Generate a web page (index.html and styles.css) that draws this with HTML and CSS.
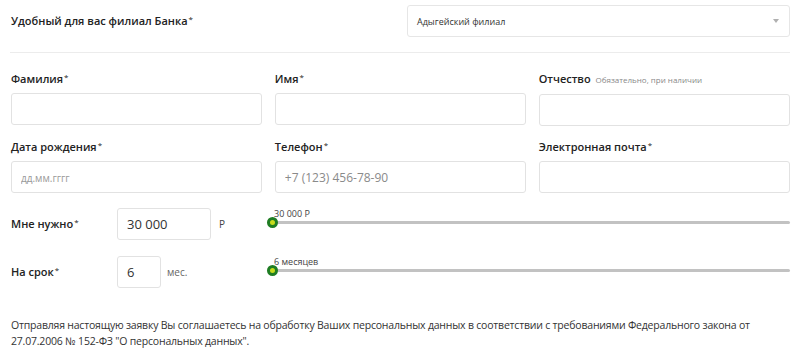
FILE: index.html
```html
<!DOCTYPE html>
<html lang="ru">
<head>
  <meta charset="UTF-8">
  <meta name="viewport" content="width=device-width, initial-scale=1.0">
  <title>Заявка на кредит</title>
  <link rel="stylesheet" href="styles.css">
</head>
<body>
  <form class="credit-form">
    <div class="branch-row">
      <label class="field-label">Удобный для вас филиал Банка<span class="req">*</span></label>
      <div class="select">
        <span>Адыгейский филиал</span>
        <i class="select-arrow"></i>
      </div>
    </div>
    <div class="divider"></div>

    <div class="fields">
      <div class="field">
        <label class="field-label">Фамилия<span class="req">*</span></label>
        <input class="input" type="text">
      </div>
      <div class="field">
        <label class="field-label">Имя<span class="req">*</span></label>
        <input class="input" type="text">
      </div>
      <div class="field">
        <label class="field-label">Отчество <span class="hint">Обязательно, при наличии</span></label>
        <input class="input" type="text">
      </div>
      <div class="field">
        <label class="field-label">Дата рождения<span class="req">*</span></label>
        <input class="input input-small" type="text" placeholder="дд.мм.гггг">
      </div>
      <div class="field">
        <label class="field-label">Телефон<span class="req">*</span></label>
        <input class="input" type="text" placeholder="+7 (123) 456-78-90">
      </div>
      <div class="field">
        <label class="field-label">Электронная почта<span class="req">*</span></label>
        <input class="input" type="text">
      </div>
    </div>

    <div class="range-row amount-row">
      <label class="field-label">Мне нужно<span class="req">*</span></label>
      <div class="value-box">
        <input class="input amount" type="text" value="30 000">
        <span class="unit">Р</span>
      </div>
      <div class="slider">
        <span class="slider-value">30 000 Р</span>
        <div class="track"><span class="thumb"></span></div>
      </div>
    </div>

    <div class="range-row term-row">
      <label class="field-label">На срок<span class="req">*</span></label>
      <div class="value-box">
        <input class="input term" type="text" value="6">
        <span class="unit unit-term">мес.</span>
      </div>
      <div class="slider">
        <span class="slider-value">6 месяцев</span>
        <div class="track"><span class="thumb"></span></div>
      </div>
    </div>

    <p class="agreement">Отправляя настоящую заявку Вы соглашаетесь на обработку Ваших персональных данных в соответствии с требованиями Федерального закона от 27.07.2006 № 152-ФЗ "О персональных данных".</p>
  </form>
</body>
</html>
```

FILE: styles.css
```css
body {
  margin: 0;
  padding: 0;
  background: #fff;
  font-family: "Open Sans", "Liberation Sans", sans-serif;
  color: #222;
}

.credit-form {
  padding: 5px 10px 0 11px;
}

.field-label {
  font-size: 11px;
  font-weight: 600;
  line-height: 16px;
  color: #222;
}
.req {
  font-size: 8px;
  font-weight: 400;
  vertical-align: top;
  line-height: 12px;
  margin-left: 1px;
}
.hint {
  font-size: 8px;
  font-weight: 400;
  color: #888;
  margin-left: 2px;
}

.branch-row {
  display: flex;
  justify-content: space-between;
  align-items: center;
  height: 32px;
}
.select {
  width: 383px;
  height: 32px;
  box-sizing: border-box;
  border: 1px solid #e6e6e6;
  border-radius: 3px;
  display: flex;
  align-items: center;
  justify-content: space-between;
  padding: 0 10px 0 9px;
  font-size: 9px;
  color: #333;
}
.select-arrow {
  width: 0;
  height: 0;
  border-left: 3px solid transparent;
  border-right: 3px solid transparent;
  border-top: 4px solid #b0b0b0;
}

.divider {
  margin: 15px 0 0 -1px;
  border-top: 1px solid #ececec;
}

.fields {
  display: grid;
  grid-template-columns: repeat(3, 1fr);
  column-gap: 12.5px;
  row-gap: 13px;
  margin-top: 18px;
}
.field {
  display: flex;
  flex-direction: column;
}
.field .field-label {
  margin-bottom: 6px;
}

.input {
  height: 32px;
  box-sizing: border-box;
  border: 1px solid #e2e2e2;
  border-radius: 3px;
  padding: 0 9px;
  font-family: inherit;
  font-size: 12px;
  color: #333;
  outline: none;
}
.input::placeholder {
  color: #8a8a8a;
}
.input-small::placeholder {
  font-size: 10px;
  color: #999;
}

.range-row {
  display: grid;
  grid-template-columns: 106px 150px 1fr;
  align-items: center;
}
.amount-row {
  margin-top: 15px;
}
.term-row {
  margin-top: 16px;
}
.value-box {
  display: flex;
  align-items: center;
}
.amount {
  width: 94px;
  font-size: 13px;
}
.term {
  width: 44px;
  font-size: 13px;
}
.unit {
  font-size: 10px;
  color: #444;
  margin-left: 8px;
}
.unit-term {
  margin-left: 6px;
  color: #666;
}

.slider {
  display: flex;
  flex-direction: column;
  margin-top: -16px;
}
.slider-value {
  font-size: 9px;
  color: #444;
  line-height: 11px;
  margin-left: 7px;
  margin-bottom: 2px;
}
.track {
  position: relative;
  height: 3px;
  background: #c2c2c2;
  border-radius: 2px;
}
.thumb {
  position: absolute;
  left: 0;
  top: -4px;
  width: 5px;
  height: 5px;
  border-radius: 50%;
  background: #c6dc1c;
  border: 3px solid #1f7d23;
}

.agreement {
  margin: 29px 0 0;
  font-size: 10.5px;
  line-height: 16px;
  color: #333;
  letter-spacing: -0.2px;
  max-width: 760px;
}
```
